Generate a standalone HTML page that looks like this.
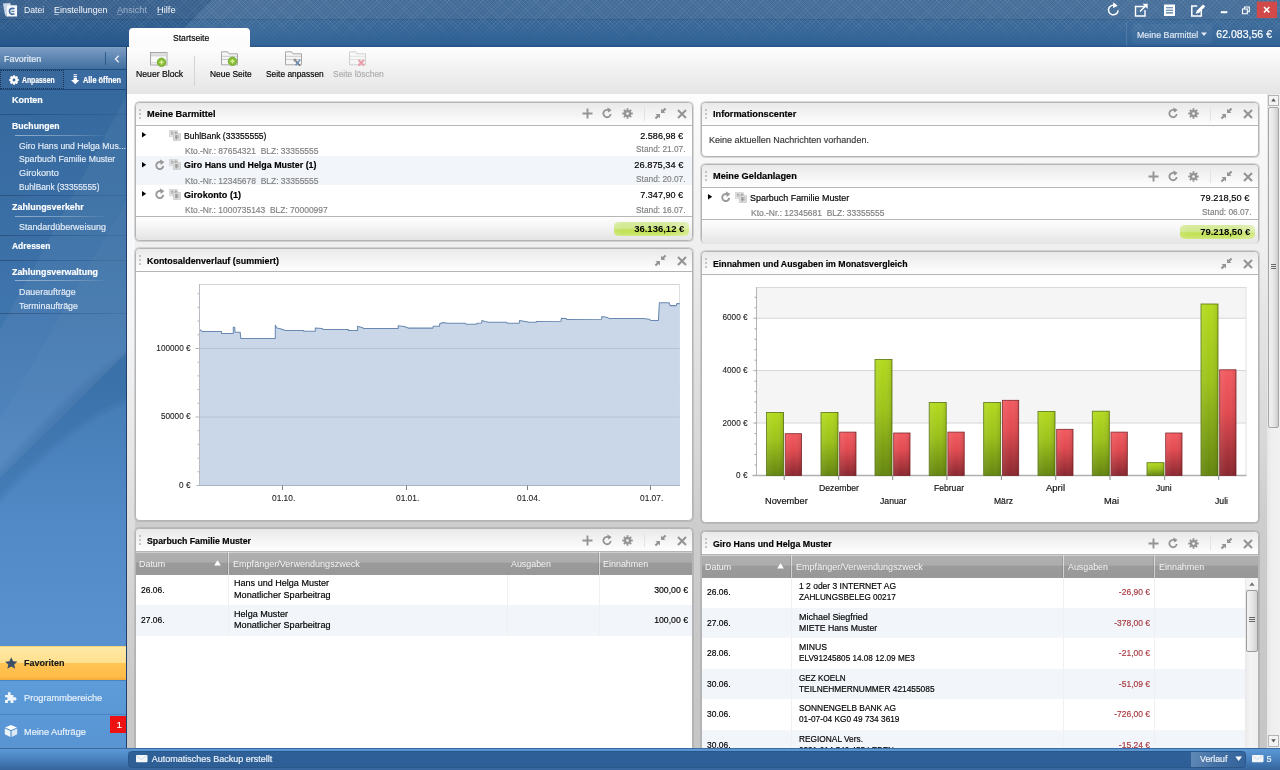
<!DOCTYPE html>
<html lang="de"><head><meta charset="utf-8"><title>Startseite</title>
<style>
html,body{margin:0;padding:0}
body{width:1280px;height:770px;position:relative;overflow:hidden;background:#fff;font-family:"Liberation Sans",sans-serif;font-size:10px}
div,span,svg,section,nav,header,footer{position:absolute;box-sizing:border-box;display:block}
.g{left:0;top:0;width:0;height:0}
.t{white-space:pre;line-height:1;-webkit-text-stroke:.17px currentColor}
.panel{border:1px solid #b4b4b4;border-radius:4.5px;background:#fff;box-shadow:0 0 0 1px rgba(140,140,140,.3);overflow:hidden}
.ph{left:0;top:0;right:0;height:23px;background:linear-gradient(#e9e9e9,#f3f3f3 45%,#fefefe);border-bottom:1px solid #b5b5b5}
.th{background:linear-gradient(#cfcfcf 0,#cfcfcf 1px,#afafaf 1.5px,#acacac 10px,#9b9b9b 11.5px,#989898 21px,#9a9a9a)}
.badge{border-radius:4.5px;background:linear-gradient(90deg,rgba(255,255,255,.12),rgba(255,255,255,0) 12%,rgba(255,255,255,0) 70%,rgba(255,255,255,.3)),linear-gradient(#d9eca4,#d0e88a 45%,#c1e055 58%,#c8e464 85%,#d2e98a)}
#app{left:0;top:0;width:1280px;height:770px;will-change:transform;overflow:hidden}
</style></head><body><div id="app">
<header class="g" id="titlebar">
<div style="left:0px;top:0px;width:1280px;height:47px;background:linear-gradient(#3f6996,#3d6795 18.5px,#2b5989 18.5px,#2b5989 19.5px,#336394 19.5px,#2d6095 42px,#2a5c92 45px,#1f4d80 47px)"></div>
<svg style="left:0;top:0" width="1280" height="47" viewBox="0 0 1280 47"><defs><linearGradient id="tb1" x1="0" y1="0" x2="1" y2="0"><stop offset="0" stop-color="#fff" stop-opacity=".06"/><stop offset=".25" stop-color="#fff" stop-opacity=".015"/><stop offset="1" stop-color="#fff" stop-opacity=".04"/></linearGradient></defs><polygon points="0,0 212,0 165,47 0,47" fill="#0c2f5e" fill-opacity=".13"/><polygon points="212,0 1280,0 1280,47 165,47" fill="url(#tb1)"/></svg>
<div style="left:0px;top:0px;width:1280px;height:40px;background:repeating-linear-gradient(45deg,rgba(255,255,255,.055) 0,rgba(255,255,255,.055) 1px,rgba(255,255,255,0) 1px,rgba(255,255,255,0) 3px),repeating-linear-gradient(-45deg,rgba(255,255,255,.055) 0,rgba(255,255,255,.055) 1px,rgba(255,255,255,0) 1px,rgba(255,255,255,0) 3px);-webkit-mask-image:linear-gradient(#000 0,#000 26px,transparent 40px);mask-image:linear-gradient(#000 0,#000 26px,transparent 40px)"></div>
<svg style="left:1.5px;top:2.2px" width="16" height="16" viewBox="0 0 17 17"><path d="M1 1.5l7.5-.5 1 2.5-6 11.5z" fill="#c9d6e6"/><path d="M5.5 3.5h10.5v12h-11.5z" fill="#f2f5f9"/><path d="M13.2 7.2c-3.2-1.2-5.3.4-5.3 2.7s2.2 3.8 5.3 2.6" fill="none" stroke="#3c6a9a" stroke-width="1.7"/><path d="M10 9.9h3.2" stroke="#3c6a9a" stroke-width="1.1"/></svg>
<span class="t" style="left:23.9px;transform-origin:0 7px;top:6px;font-size:9.18px;color:#f4f7fb;transform:scale(0.943,1.06);-webkit-text-stroke:0">Datei</span>
<span class="t" style="left:53.6px;transform-origin:0 7px;top:6px;font-size:9.18px;color:#f4f7fb;transform:scale(0.973,1.06);-webkit-text-stroke:0">Einstellungen</span>
<span class="t" style="left:116.9px;transform-origin:0 7px;top:6px;font-size:9.18px;color:#9db2cb;transform:scale(0.997,1.06);-webkit-text-stroke:0">Ansicht</span>
<span class="t" style="left:156.7px;transform-origin:0 7px;top:6px;font-size:9.18px;color:#f4f7fb;transform:scale(1.013,1.06);-webkit-text-stroke:0">Hilfe</span>
<div style="left:54px;top:14px;width:5px;height:1px;background:rgba(230,237,245,.55)"></div>
<div style="left:117px;top:14px;width:5px;height:1px;background:rgba(160,180,205,.5)"></div>
<div style="left:157px;top:14px;width:5px;height:1px;background:rgba(230,237,245,.55)"></div>
<svg style="left:1105px;top:.6px" width="175" height="18" viewBox="0 0 175 18"><g fill="none" stroke="#fff" stroke-width="1.5"><path d="M11.3 5.3a4.8 4.8 0 1 0 1.8 3.9"/></g><path d="M8.2 1.2l4.4 3.4-4.4 2.6z" fill="#fff"/><g fill="none" stroke="#fff" stroke-width="1.4"><path d="M40.5 5.5h-10v9.5h9.5v-6"/><path d="M35 10.5l6.5-6.5"/></g><path d="M37.5 2.8h5.2v5.2z" fill="#fff"/><rect x="59" y="3.5" width="11" height="11.5" fill="#fff"/><path d="M61 6.7h7M61 9.3h7M61 11.9h7" stroke="#41709f" stroke-width="1.1"/><g transform="translate(3.8 0)"><path d="M92.5 8.5v6.5h-9.5v-10h5.5" fill="none" stroke="#fff" stroke-width="1.5"/><path d="M87 12.8l.9-3.1 6.3-6.3 2.2 2.2-6.3 6.3z" fill="#fff"/></g><rect x="115.8" y="10.2" width="6.5" height="2" fill="#fff"/><path d="M137.5 8h4.8v4.8h-4.8z M139.5 8v-2h4.8v4.8h-2" fill="none" stroke="#fff" stroke-width="1.1"/><rect x="151.8" y="0.6" width="20.2" height="16.4" fill="#d14949"/><path d="M159 6l5.4 5.4M164.4 6l-5.4 5.4" stroke="#fff" stroke-width="1.5"/></svg>
<div style="left:129px;top:28px;width:121px;height:20px;background:linear-gradient(#fff,#fbfbfb);border-radius:4px 4px 0 0"></div>
<span class="t" style="left:173px;transform-origin:0 7px;top:34px;font-size:9.0px;color:#000;transform:scale(0.954,1.06);">Startseite</span>
<div style="left:1126px;top:22px;width:1px;height:24px;background:rgba(255,255,255,.13)"></div>
<div style="left:1133px;top:25px;width:78px;height:18px;background:rgba(255,255,255,.045);border-radius:2px;box-shadow:0 0 0 1px rgba(255,255,255,.04)"></div>
<span class="t" style="left:1137px;transform-origin:0 7px;top:31px;font-size:8.55px;color:#dfe8f2;transform:scale(1.033,1.06);">Meine Barmittel</span>
<svg style="left:1201px;top:32px" width="7" height="5"><path d="M0 .5h6l-3 3.5z" fill="#e6edf5"/></svg>
<span class="t" style="right:-1272px;transform-origin:100% 9px;top:29px;font-size:10.8px;color:#fff;transform:scale(0.978,1.06);">62.083,56 €</span>
</header>
<nav class="g" id="sidebar">
<div style="left:0px;top:47px;width:127px;height:701px;background:linear-gradient(#35699e 0,#366a9f 60px,#3b70a7 200px,#447bb4 330px,#5089c5 470px,#5992cf 600px)"></div>
<svg style="left:0;top:47px" width="127" height="701" viewBox="0 47 127 701"><defs><filter id="sbl" x="-20%" y="-20%" width="140%" height="140%"><feGaussianBlur stdDeviation="2.5"/></filter></defs><polygon points="127,95 127,352 0,478 0,330" fill="#fff" fill-opacity=".045"/><polygon points="127,200 127,352 0,478 0,420" fill="#fff" fill-opacity=".025"/><g filter="url(#sbl)"><path d="M135 348 C 80 380, 40 430, -8 478 L -8 508 C 40 455, 85 415, 135 398 Z" fill="#0a2d5c" fill-opacity=".13"/></g></svg>
<div style="left:0px;top:47px;width:127px;height:23px;background:linear-gradient(#86a6c9 0,#7a9cc3 1px,#6188b4 45%,#416f9f);border-bottom:1px solid #214b7c"></div>
<span class="t" style="left:4px;transform-origin:0 7px;top:55px;font-size:9.0px;color:#e9eff6;transform:scale(0.991,1.06);">Favoriten</span>
<div style="left:105px;top:52px;width:1px;height:13px;background:#2c5a8c"></div>
<svg style="left:113px;top:54px" width="8" height="10"><path d="M5.7 1.7L2.4 5l3.3 3.3" fill="none" stroke="#e9eff6" stroke-width="1.3"/></svg>
<div style="left:0px;top:70px;width:127px;height:20px;background:#3a6ba0;border-bottom:1px solid #1f4a7c"></div>
<div style="left:0px;top:70px;width:64px;height:19px;border:1px dotted #18365c;background:#38689c"></div>
<svg style="left:9px;top:74.7px" width="10" height="10" viewBox="0 0 12 12"><g fill="#fff"><circle cx="6" cy="6" r="4.6"/><rect x="4.7" y=".3" width="2.6" height="11.4" rx=".6"/><rect x=".3" y="4.7" width="11.4" height="2.6" rx=".6"/><g transform="rotate(45 6 6)"><rect x="4.7" y=".3" width="2.6" height="11.4" rx=".6"/><rect x=".3" y="4.7" width="11.4" height="2.6" rx=".6"/></g></g><circle cx="6" cy="6" r="1.7" fill="#38689c"/></svg>
<span class="t" style="left:22.3px;transform-origin:0 6px;top:77px;font-size:7.92px;font-weight:bold;color:#fff;transform:scale(0.863,1.06);">Anpassen</span>
<svg style="left:70.8px;top:74.3px" width="8.5" height="10.5" viewBox="0 0 10 12.4"><path d="M3 0h4v1h-4zM3 2h4v1.5h-4zM3 4.5h4v2.7h3l-5 5-5-5h3z" fill="#fff"/></svg>
<span class="t" style="left:83.3px;transform-origin:0 6px;top:77px;font-size:7.92px;font-weight:bold;color:#fff;transform:scale(0.93,1.06);">Alle öffnen</span>
<span class="t" style="left:11.6px;transform-origin:0 7px;top:96px;font-size:9.18px;font-weight:bold;color:#fff;transform:scale(0.975,1.06);">Konten</span>
<div style="left:0px;top:114px;width:127px;height:1px;background:linear-gradient(90deg,rgba(20,50,90,.45),rgba(20,50,90,.3) 40%,rgba(20,50,90,.12))"></div>
<span class="t" style="left:11.6px;transform-origin:0 7px;top:122px;font-size:9.18px;font-weight:bold;color:#fff;transform:scale(0.945,1.06);">Buchungen</span>
<div style="left:15px;top:135px;width:95px;height:1px;background:linear-gradient(90deg,rgba(255,255,255,.45),rgba(255,255,255,.25) 60%,rgba(255,255,255,0))"></div>
<span class="t" style="left:19.4px;transform-origin:0 7px;top:142px;font-size:9.0px;color:#e4ecf6;transform:scale(0.963,1.06);">Giro Hans und Helga Mus...</span>
<span class="t" style="left:19.4px;transform-origin:0 7px;top:155px;font-size:9.0px;color:#e4ecf6;transform:scale(0.961,1.06);">Sparbuch Familie Muster</span>
<span class="t" style="left:19.4px;transform-origin:0 7px;top:169px;font-size:9.0px;color:#e4ecf6;transform:scale(1.022,1.06);">Girokonto</span>
<span class="t" style="left:19.4px;transform-origin:0 7px;top:183px;font-size:9.0px;color:#e4ecf6;transform:scale(0.924,1.06);">BuhlBank (33355555)</span>
<div style="left:0px;top:195px;width:127px;height:1px;background:linear-gradient(90deg,rgba(20,50,90,.45),rgba(20,50,90,.3) 40%,rgba(20,50,90,.12))"></div>
<span class="t" style="left:11.6px;transform-origin:0 7px;top:203px;font-size:9.18px;font-weight:bold;color:#fff;transform:scale(0.97,1.06);">Zahlungsverkehr</span>
<div style="left:15px;top:216px;width:95px;height:1px;background:linear-gradient(90deg,rgba(255,255,255,.45),rgba(255,255,255,.25) 60%,rgba(255,255,255,0))"></div>
<span class="t" style="left:19.4px;transform-origin:0 7px;top:223px;font-size:9.0px;color:#e4ecf6;transform:scale(0.992,1.06);">Standardüberweisung</span>
<div style="left:0px;top:235px;width:127px;height:1px;background:linear-gradient(90deg,rgba(20,50,90,.45),rgba(20,50,90,.3) 40%,rgba(20,50,90,.12))"></div>
<span class="t" style="left:11.6px;transform-origin:0 7px;top:242px;font-size:9.18px;font-weight:bold;color:#fff;transform:scale(0.916,1.06);">Adressen</span>
<div style="left:0px;top:260px;width:127px;height:1px;background:linear-gradient(90deg,rgba(20,50,90,.45),rgba(20,50,90,.3) 40%,rgba(20,50,90,.12))"></div>
<span class="t" style="left:11.6px;transform-origin:0 7px;top:268px;font-size:9.18px;font-weight:bold;color:#fff;transform:scale(0.964,1.06);">Zahlungsverwaltung</span>
<div style="left:15px;top:280px;width:95px;height:1px;background:linear-gradient(90deg,rgba(255,255,255,.45),rgba(255,255,255,.25) 60%,rgba(255,255,255,0))"></div>
<span class="t" style="left:19.4px;transform-origin:0 7px;top:288px;font-size:9.0px;color:#e4ecf6;transform:scale(0.985,1.06);">Daueraufträge</span>
<span class="t" style="left:19.4px;transform-origin:0 7px;top:302px;font-size:9.0px;color:#e4ecf6;transform:scale(0.981,1.06);">Terminaufträge</span>
<div style="left:0px;top:313px;width:127px;height:1px;background:linear-gradient(90deg,rgba(20,50,90,.45),rgba(20,50,90,.3) 40%,rgba(20,50,90,.12))"></div>
<div style="left:0px;top:646px;width:127px;height:34px;background:linear-gradient(#ffe9a6,#ffe08e 47%,#ffc554 50%,#ffbb47 90%,#f3a93a);border-top:1px solid #f6d27c"></div>
<svg style="left:4.7px;top:656.5px" width="12.5" height="12" viewBox="0 0 14 13"><path d="M7 0l2.1 4.5 4.9.5-3.7 3.2 1.1 4.8-4.4-2.6-4.4 2.6 1.1-4.8L0 5l4.9-.5z" fill="#3c5068"/></svg>
<span class="t" style="left:24px;transform-origin:0 7px;top:659px;font-size:9.0px;font-weight:bold;color:#1a1a1a;transform:scale(1.0,1.06);">Favoriten</span>
<div style="left:0px;top:680px;width:127px;height:34px;background:linear-gradient(#5d9bd9,#5a97d5);border-top:1px solid #4b84c0"></div>
<svg style="left:4px;top:690px" width="14" height="14" viewBox="0 0 14 14"><path d="M1 5h3.2c-.9-1.5-.3-3 1.1-3s2 1.5 1.1 3H9.5v2.8c1.5-.9 3-.3 3 1.1s-1.5 2-3 1.1V13H6.4c.8-1.4.2-2.6-1.1-2.6S3.4 11.6 4.2 13H1V9.7c1.3.8 2.6.2 2.6-1.1S2.3 6.7 1 7.5z" fill="#eef4fb"/></svg>
<span class="t" style="left:24px;transform-origin:0 7px;top:694px;font-size:9.0px;color:#e9f1fa;transform:scale(1.022,1.06);">Programmbereiche</span>
<div style="left:0px;top:714px;width:127px;height:34px;background:linear-gradient(#5b98d7,#5894d2);border-top:1px solid #4b84c0"></div>
<svg style="left:4px;top:724px" width="14" height="14" viewBox="0 0 14 14"><path d="M7 1l6 2.5-6 2.5-6-2.5z" fill="#fff"/><path d="M.8 4.6l5.6 2.4v6l-5.6-2.7z" fill="#eef4fb"/><path d="M13.2 4.6l-5.6 2.4v6l5.6-2.7z" fill="#dde8f5"/></svg>
<span class="t" style="left:24px;transform-origin:0 7px;top:728px;font-size:9.0px;color:#e9f1fa;transform:scale(1.022,1.06);">Meine Aufträge</span>
<div style="left:110px;top:716px;width:17px;height:17px;background:#ee1111"></div>
<span class="t" style="left:118.5px;transform-origin:0 50%;transform:translateX(-50%) scaleX(1.111);top:721px;font-size:9.0px;color:#fff;">1</span>
<div style="left:126px;top:47px;width:1px;height:701px;background:#1f4068"></div>
</nav>
<section class="g" id="toolbar">
<div style="left:127px;top:47px;width:1153px;height:47px;background:linear-gradient(#fefefe,#f6f6f6 30%,#ececec 70%,#e5e5e5)"></div>
<div style="left:129px;top:47px;width:121px;height:2px;background:#fdfdfd"></div>
<svg style="left:150px;top:52px" width="18" height="17" viewBox="0 0 18 17"><rect x=".5" y=".5" width="16.5" height="12.5" fill="#fafafa" stroke="#a8a8a8"/><rect x="1" y="1" width="15.5" height="2.3" fill="#dedede"/><path d="M1 3.8h15.5" stroke="#c4c4c4" stroke-width=".8"/><path d="M1 10.8h15.5" stroke="#d0d0d0"/><circle cx="11.5" cy="10.3" r="4.3" fill="#86bc3a"/><circle cx="11.5" cy="10.3" r="4.2" fill="none" stroke="#74a92c" stroke-width=".9"/><path d="M9.4 10.3h4.2M11.5 8.2v4.2" stroke="#d9ef8e" stroke-width="1.5"/></svg>
<span class="t" style="left:135.8px;transform-origin:0 7px;top:70px;font-size:9.0px;color:#000;transform:scale(0.963,1.06);">Neuer Block</span>
<div style="left:194px;top:56px;width:1px;height:30px;background:#d4d4d4"></div>
<svg style="left:221px;top:51px" width="18" height="17" viewBox="0 0 18 17"><path d="M.5 2.8V.8h6.3l1.2 2h8.5v11h-16z" fill="#f6f6f6" stroke="#a8a8a8"/><path d="M1 5.3h15M1 8.5h15" stroke="#cbcbcb"/><circle cx="11.5" cy="10.3" r="4.3" fill="#86bc3a"/><circle cx="11.5" cy="10.3" r="4.2" fill="none" stroke="#74a92c" stroke-width=".9"/><path d="M9.4 10.3h4.2M11.5 8.2v4.2" stroke="#d9ef8e" stroke-width="1.5"/></svg>
<span class="t" style="left:209.6px;transform-origin:0 7px;top:70px;font-size:9.0px;color:#000;transform:scale(0.936,1.06);">Neue Seite</span>
<svg style="left:285px;top:51px" width="18" height="17" viewBox="0 0 18 17"><path d="M.5 2.8V.8h6.3l1.2 2h8.5v11h-16z" fill="#f6f6f6" stroke="#a8a8a8"/><path d="M1 5.3h15M1 8.5h15" stroke="#cbcbcb"/><g transform="translate(.6 1.2)"><path d="M9 7.5l5.5 6" stroke="#777" stroke-width="1.7"/><path d="M14.5 7.5l-4.5 5.5" stroke="#6a93c0" stroke-width="1.7"/><circle cx="9.3" cy="7.8" r="1.5" fill="#909090"/></g></svg>
<span class="t" style="left:265.7px;transform-origin:0 7px;top:70px;font-size:9.0px;color:#000;transform:scale(0.93,1.06);">Seite anpassen</span>
<svg style="left:349px;top:51px;opacity:.5" width="18" height="17" viewBox="0 0 18 17"><path d="M.5 2.8V.8h6.3l1.2 2h8.5v11h-16z" fill="#f6f6f6" stroke="#a8a8a8"/><path d="M1 5.3h15M1 8.5h15" stroke="#cbcbcb"/><path d="M9.5 9l5.5 5.5M15 9l-5.5 5.5" stroke="#e0455a" stroke-width="2"/></svg>
<span class="t" style="left:332.7px;transform-origin:0 7px;top:70px;font-size:9.0px;color:#adadad;transform:scale(0.94,1.06);">Seite löschen</span>
</section>
<section class="g" id="content">
<div style="left:127px;top:94px;width:1153px;height:654px;background:linear-gradient(#fdfdfd 0,#f7f7f7 60px,#efefef 156px,#e6e6e6 206px,#d6d6d6 366px,#cdcdcd 426px,#c8c8c8 560px,#c6c6c6 654px)"></div>
<div style="left:127px;top:94px;width:8px;height:654px;background:linear-gradient(#fefefe 0,#f5f6f8 226px,#e3e3e3 386px,#d2d2d2 506px,#c8c8c8 606px,#c7c7c7 654px)"></div>
<section class="g" id="p-barmittel">
<div class="panel" style="left:135px;top:102px;width:558px;height:139px;"><div class="ph"></div></div>
<div style="left:139px;top:109px;width:2px;height:2px;background:#b5b5b5;border-radius:1px"></div><div style="left:139px;top:113px;width:2px;height:2px;background:#b5b5b5;border-radius:1px"></div><div style="left:139px;top:117px;width:2px;height:2px;background:#b5b5b5;border-radius:1px"></div>
<span class="t" style="left:147.3px;transform-origin:0 7px;top:110px;font-size:9.0px;font-weight:bold;color:#000;transform:scale(1.022,1.06);">Meine Barmittel</span>
<svg style="left:677px;top:109px" width="10" height="10"><path d="M1 1l8 8M9 1l-8 8" stroke="#949494" stroke-width="2.1"/></svg><svg style="left:654.1px;top:107px" width="13" height="13" viewBox="0 0 12 12"><g fill="#949494"><path d="M6.5 5.5V1.5l1.3 1.3L10 .6l1.4 1.4-2.2 2.2 1.3 1.3z"/><path d="M5.5 6.5v4L4.2 9.2 2 11.4.6 10l2.2-2.2L1.5 6.5z"/></g></svg><div style="left:644px;top:106.5px;width:1px;height:14px;background:#e3e3e3"></div><svg style="left:621.9px;top:108px" width="11" height="11" viewBox="0 0 12 12"><g stroke="#949494" stroke-width="2"><path d="M6 .3v11.4M.3 6h11.4M2 2l8 8M10 2l-8 8"/></g><circle cx="6" cy="6" r="3.8" fill="#949494"/><circle cx="6" cy="6" r="1.5" fill="#f2f2f2"/></svg><svg style="left:600.7px;top:107px" width="12" height="12" viewBox="0 0 12 12"><path d="M8.9 4.2A3.7 3.7 0 1 0 9.7 7" fill="none" stroke="#949494" stroke-width="1.8"/><path d="M6.3 .3l4.3 2.6-3.4 2.7z" fill="#949494"/></svg><svg style="left:581.5px;top:108px" width="11" height="11"><path d="M5.5 .5v10M.5 5.5h10" stroke="#949494" stroke-width="1.9"/></svg>
<svg style="left:142.3px;top:132.0px" width="5" height="6"><path d="M0 0l4.2 2.8L0 5.6z" fill="#000"/></svg><svg style="left:168.8px;top:129.6px" width="12" height="11" viewBox="0 0 12 11"><rect x=".3" y=".3" width="8" height="6.5" fill="#e4e4e4" stroke="#d0d0d0" stroke-width=".6"/><rect x="4.2" y="3.6" width="7.4" height="7" fill="#dadada" stroke="#c6c6c6" stroke-width=".6"/><path d="M1.8 2.2h2.6M1.8 4h2M6.3 1.5v2.2M7.8 1.8v1.6M6 6h3.6M6 7.8h3.6M7.2 5v4.5" stroke="#8c8c8c" stroke-width=".9" fill="none"/></svg><span class="t" style="left:183.6px;transform-origin:0 7px;top:132px;font-size:9.0px;color:#000;transform:scale(0.947,1.06);">BuhlBank (33355555)</span><span class="t" style="left:184.5px;transform-origin:0 7px;top:147px;font-size:9.0px;color:#808080;transform:scale(0.939,1.06);">Kto.-Nr.: 87654321  BLZ: 33355555</span><span class="t" style="right:-683.3px;transform-origin:100% 8px;top:131px;font-size:9.54px;color:#000;transform:scale(0.95,1.04);">2.586,98 €</span><span class="t" style="right:-685.5px;transform-origin:100% 7px;top:145px;font-size:9.0px;color:#808080;transform:scale(0.924,1.06);">Stand: 21.07.</span><div style="left:136px;top:156.2px;width:556px;height:29.3px;background:#f2f5fa"></div><svg style="left:142.3px;top:161.7px" width="5" height="6"><path d="M0 0l4.2 2.8L0 5.6z" fill="#000"/></svg><svg style="left:153.7px;top:158.8px" width="11.5" height="12" viewBox="0 0 12 12"><path d="M8.9 4.2A3.7 3.7 0 1 0 9.7 7" fill="none" stroke="#9a9a9a" stroke-width="2"/><path d="M6 .1l4.8 2.8-3.7 3z" fill="#9a9a9a"/></svg><svg style="left:168.8px;top:159.3px" width="12" height="11" viewBox="0 0 12 11"><rect x=".3" y=".3" width="8" height="6.5" fill="#e4e4e4" stroke="#d0d0d0" stroke-width=".6"/><rect x="4.2" y="3.6" width="7.4" height="7" fill="#dadada" stroke="#c6c6c6" stroke-width=".6"/><path d="M1.8 2.2h2.6M1.8 4h2M6.3 1.5v2.2M7.8 1.8v1.6M6 6h3.6M6 7.8h3.6M7.2 5v4.5" stroke="#8c8c8c" stroke-width=".9" fill="none"/></svg><span class="t" style="left:183.6px;transform-origin:0 7px;top:161px;font-size:9.0px;font-weight:bold;color:#000;transform:scale(0.985,1.06);">Giro Hans und Helga Muster (1)</span><span class="t" style="left:184.5px;transform-origin:0 7px;top:177px;font-size:9.0px;color:#808080;transform:scale(0.939,1.06);">Kto.-Nr.: 12345678  BLZ: 33355555</span><span class="t" style="right:-683.3px;transform-origin:100% 8px;top:160px;font-size:9.54px;color:#000;transform:scale(0.973,1.04);">26.875,34 €</span><span class="t" style="right:-685.5px;transform-origin:100% 7px;top:175px;font-size:9.0px;color:#808080;transform:scale(0.924,1.06);">Stand: 20.07.</span><svg style="left:142.3px;top:191.3px" width="5" height="6"><path d="M0 0l4.2 2.8L0 5.6z" fill="#000"/></svg><svg style="left:153.7px;top:188.4px" width="11.5" height="12" viewBox="0 0 12 12"><path d="M8.9 4.2A3.7 3.7 0 1 0 9.7 7" fill="none" stroke="#9a9a9a" stroke-width="2"/><path d="M6 .1l4.8 2.8-3.7 3z" fill="#9a9a9a"/></svg><svg style="left:168.8px;top:188.9px" width="12" height="11" viewBox="0 0 12 11"><rect x=".3" y=".3" width="8" height="6.5" fill="#e4e4e4" stroke="#d0d0d0" stroke-width=".6"/><rect x="4.2" y="3.6" width="7.4" height="7" fill="#dadada" stroke="#c6c6c6" stroke-width=".6"/><path d="M1.8 2.2h2.6M1.8 4h2M6.3 1.5v2.2M7.8 1.8v1.6M6 6h3.6M6 7.8h3.6M7.2 5v4.5" stroke="#8c8c8c" stroke-width=".9" fill="none"/></svg><span class="t" style="left:183.6px;transform-origin:0 7px;top:191px;font-size:9.0px;font-weight:bold;color:#000;transform:scale(1.009,1.06);">Girokonto (1)</span><span class="t" style="left:184.5px;transform-origin:0 7px;top:206px;font-size:9.0px;color:#808080;transform:scale(0.938,1.06);">Kto.-Nr.: 1000735143  BLZ: 70000997</span><span class="t" style="right:-683.3px;transform-origin:100% 8px;top:190px;font-size:9.54px;color:#000;transform:scale(0.95,1.04);">7.347,90 €</span><span class="t" style="right:-685.5px;transform-origin:100% 7px;top:206px;font-size:9.0px;color:#808080;transform:scale(0.924,1.06);">Stand: 16.07.</span><div style="left:136px;top:216px;width:556px;height:24px;background:linear-gradient(#fefefe,#f5f5f5 40%,#e4e4e4);border-top:1px solid #b5b5b5;border-radius:0 0 4px 4px"></div><div class="badge" style="left:613.5px;top:221.5px;width:75.2px;height:14.3px;"></div><span class="t" style="right:-684px;transform-origin:100% 8px;top:224px;font-size:9.54px;font-weight:bold;color:#000;transform:scale(0.997,1.04);-webkit-text-stroke:0">36.136,12 €</span>
</section>
<section class="g" id="p-info">
<div class="panel" style="left:701px;top:102px;width:558px;height:55px;"><div class="ph"></div></div>
<div style="left:705px;top:109px;width:2px;height:2px;background:#b5b5b5;border-radius:1px"></div><div style="left:705px;top:113px;width:2px;height:2px;background:#b5b5b5;border-radius:1px"></div><div style="left:705px;top:117px;width:2px;height:2px;background:#b5b5b5;border-radius:1px"></div>
<span class="t" style="left:713.3px;transform-origin:0 7px;top:110px;font-size:9.0px;font-weight:bold;color:#000;transform:scale(1.022,1.06);">Informationscenter</span>
<svg style="left:1243px;top:109px" width="10" height="10"><path d="M1 1l8 8M9 1l-8 8" stroke="#949494" stroke-width="2.1"/></svg><svg style="left:1220.1px;top:107px" width="13" height="13" viewBox="0 0 12 12"><g fill="#949494"><path d="M6.5 5.5V1.5l1.3 1.3L10 .6l1.4 1.4-2.2 2.2 1.3 1.3z"/><path d="M5.5 6.5v4L4.2 9.2 2 11.4.6 10l2.2-2.2L1.5 6.5z"/></g></svg><div style="left:1210px;top:106.5px;width:1px;height:14px;background:#e3e3e3"></div><svg style="left:1187.9px;top:108px" width="11" height="11" viewBox="0 0 12 12"><g stroke="#949494" stroke-width="2"><path d="M6 .3v11.4M.3 6h11.4M2 2l8 8M10 2l-8 8"/></g><circle cx="6" cy="6" r="3.8" fill="#949494"/><circle cx="6" cy="6" r="1.5" fill="#f2f2f2"/></svg><svg style="left:1166.7px;top:107px" width="12" height="12" viewBox="0 0 12 12"><path d="M8.9 4.2A3.7 3.7 0 1 0 9.7 7" fill="none" stroke="#949494" stroke-width="1.8"/><path d="M6.3 .3l4.3 2.6-3.4 2.7z" fill="#949494"/></svg>
<span class="t" style="left:709.2px;transform-origin:0 7px;top:136px;font-size:9.0px;color:#3a3a3a;transform:scale(1.002,1.06);">Keine aktuellen Nachrichten vorhanden.</span>
</section>
<section class="g" id="p-geld">
<div class="panel" style="left:701px;top:164px;width:558px;height:79.2px;"><div class="ph"></div></div>
<div style="left:705px;top:171px;width:2px;height:2px;background:#b5b5b5;border-radius:1px"></div><div style="left:705px;top:175px;width:2px;height:2px;background:#b5b5b5;border-radius:1px"></div><div style="left:705px;top:179px;width:2px;height:2px;background:#b5b5b5;border-radius:1px"></div>
<span class="t" style="left:713.3px;transform-origin:0 7px;top:172px;font-size:9.0px;font-weight:bold;color:#000;transform:scale(1.022,1.06);">Meine Geldanlagen</span>
<svg style="left:1243px;top:171.5px" width="10" height="10"><path d="M1 1l8 8M9 1l-8 8" stroke="#949494" stroke-width="2.1"/></svg><svg style="left:1220.1px;top:169.5px" width="13" height="13" viewBox="0 0 12 12"><g fill="#949494"><path d="M6.5 5.5V1.5l1.3 1.3L10 .6l1.4 1.4-2.2 2.2 1.3 1.3z"/><path d="M5.5 6.5v4L4.2 9.2 2 11.4.6 10l2.2-2.2L1.5 6.5z"/></g></svg><div style="left:1210px;top:169.0px;width:1px;height:14px;background:#e3e3e3"></div><svg style="left:1187.9px;top:170.5px" width="11" height="11" viewBox="0 0 12 12"><g stroke="#949494" stroke-width="2"><path d="M6 .3v11.4M.3 6h11.4M2 2l8 8M10 2l-8 8"/></g><circle cx="6" cy="6" r="3.8" fill="#949494"/><circle cx="6" cy="6" r="1.5" fill="#f2f2f2"/></svg><svg style="left:1166.7px;top:169.5px" width="12" height="12" viewBox="0 0 12 12"><path d="M8.9 4.2A3.7 3.7 0 1 0 9.7 7" fill="none" stroke="#949494" stroke-width="1.8"/><path d="M6.3 .3l4.3 2.6-3.4 2.7z" fill="#949494"/></svg><svg style="left:1147.5px;top:170.5px" width="11" height="11"><path d="M5.5 .5v10M.5 5.5h10" stroke="#949494" stroke-width="1.9"/></svg>
<svg style="left:708.3px;top:194.2px" width="5" height="6"><path d="M0 0l4.2 2.8L0 5.6z" fill="#000"/></svg><svg style="left:719.7px;top:191.3px" width="11.5" height="12" viewBox="0 0 12 12"><path d="M8.9 4.2A3.7 3.7 0 1 0 9.7 7" fill="none" stroke="#9a9a9a" stroke-width="2"/><path d="M6 .1l4.8 2.8-3.7 3z" fill="#9a9a9a"/></svg><svg style="left:734.8px;top:191.8px" width="12" height="11" viewBox="0 0 12 11"><rect x=".3" y=".3" width="8" height="6.5" fill="#e4e4e4" stroke="#d0d0d0" stroke-width=".6"/><rect x="4.2" y="3.6" width="7.4" height="7" fill="#dadada" stroke="#c6c6c6" stroke-width=".6"/><path d="M1.8 2.2h2.6M1.8 4h2M6.3 1.5v2.2M7.8 1.8v1.6M6 6h3.6M6 7.8h3.6M7.2 5v4.5" stroke="#8c8c8c" stroke-width=".9" fill="none"/></svg><span class="t" style="left:749.6px;transform-origin:0 7px;top:194px;font-size:9.0px;color:#000;transform:scale(0.992,1.06);">Sparbuch Familie Muster</span><span class="t" style="left:750.5px;transform-origin:0 7px;top:209px;font-size:9.0px;color:#808080;transform:scale(0.939,1.06);">Kto.-Nr.: 12345681  BLZ: 33355555</span><span class="t" style="right:-1249.3px;transform-origin:100% 8px;top:193px;font-size:9.54px;color:#000;transform:scale(0.973,1.04);">79.218,50 €</span><span class="t" style="right:-1251.5px;transform-origin:100% 7px;top:208px;font-size:9.0px;color:#808080;transform:scale(0.924,1.06);">Stand: 06.07.</span><div style="left:702px;top:219px;width:556px;height:24.5px;background:linear-gradient(#fefefe,#f5f5f5 40%,#e4e4e4);border-top:1px solid #b5b5b5;border-radius:0 0 4px 4px"></div><div class="badge" style="left:1179.5px;top:224.5px;width:75.2px;height:14.3px;"></div><span class="t" style="right:-1250px;transform-origin:100% 8px;top:227px;font-size:9.54px;font-weight:bold;color:#000;transform:scale(0.997,1.04);-webkit-text-stroke:0">79.218,50 €</span>
</section>
<section class="g" id="p-saldo">
<div class="panel" style="left:135px;top:248px;width:558px;height:273px;"><div class="ph"></div></div>
<div style="left:139px;top:255px;width:2px;height:2px;background:#b5b5b5;border-radius:1px"></div><div style="left:139px;top:259px;width:2px;height:2px;background:#b5b5b5;border-radius:1px"></div><div style="left:139px;top:263px;width:2px;height:2px;background:#b5b5b5;border-radius:1px"></div>
<span class="t" style="left:147.3px;transform-origin:0 7px;top:257px;font-size:9.0px;font-weight:bold;color:#000;transform:scale(0.992,1.06);">Kontosaldenverlauf (summiert)</span>
<svg style="left:677px;top:255.5px" width="10" height="10"><path d="M1 1l8 8M9 1l-8 8" stroke="#949494" stroke-width="2.1"/></svg><svg style="left:654.1px;top:253.5px" width="13" height="13" viewBox="0 0 12 12"><g fill="#949494"><path d="M6.5 5.5V1.5l1.3 1.3L10 .6l1.4 1.4-2.2 2.2 1.3 1.3z"/><path d="M5.5 6.5v4L4.2 9.2 2 11.4.6 10l2.2-2.2L1.5 6.5z"/></g></svg>
<svg style="left:0;top:0" width="1280" height="770" viewBox="0 0 1280 770"><rect x="199.5" y="284" width="480.5" height="201.5" fill="#fff"/><path d="M199.5 284.5H680" stroke="#d4d4d4"/><path d="M679.5 284V485.5" stroke="#e0e0e0"/><polygon points="199.8,329.8 202.2,331.4 221.5,331.4 221.5,333.4 233.3,333.4 233.3,327.3 234.7,327.3 235.1,332.2 240.2,332.2 240.8,338.5 275.3,338.5 275.3,325.3 276.9,328.1 280.4,328.8 285.5,330.4 303.8,330.4 303.8,331.2 315.3,331.2 315.3,328.1 322.0,328.5 323.0,329.4 348.4,329.4 348.4,330.4 357.6,330.4 357.6,326.3 362.7,327.7 363.7,328.5 398.2,328.5 398.2,325.7 404.3,326.5 408.4,328.1 432.7,328.1 433.3,326.3 439.4,326.3 439.8,323.7 442.9,322.5 446.3,322.9 447.0,323.3 465.4,323.3 466.4,324.3 476.6,324.3 477.0,323.3 481.6,322.9 482.0,320.4 484.7,321.6 488.8,322.3 506.6,322.3 507.4,323.3 519.2,323.3 519.6,320.4 525.3,321.4 529.4,322.3 535.9,322.3 536.7,321.4 561.0,321.2 561.5,318.2 566.0,318.4 566.8,319.4 601.5,319.2 601.9,316.6 607.6,317.6 609.0,318.4 643.1,318.4 649.2,319.2 650.8,320.4 658.4,320.4 659.4,302.8 669.1,302.8 670.1,305.6 676.2,305.6 676.8,303.6 679.7,303.6 680,485.5 199.5,485.5" fill="#cad7e9"/><path d="M199.5 348.5H680" stroke="#b3c2d8" stroke-width="1"/><path d="M199.5 417H680" stroke="#b3c2d8" stroke-width="1"/><polyline points="199.8,329.8 202.2,331.4 221.5,331.4 221.5,333.4 233.3,333.4 233.3,327.3 234.7,327.3 235.1,332.2 240.2,332.2 240.8,338.5 275.3,338.5 275.3,325.3 276.9,328.1 280.4,328.8 285.5,330.4 303.8,330.4 303.8,331.2 315.3,331.2 315.3,328.1 322.0,328.5 323.0,329.4 348.4,329.4 348.4,330.4 357.6,330.4 357.6,326.3 362.7,327.7 363.7,328.5 398.2,328.5 398.2,325.7 404.3,326.5 408.4,328.1 432.7,328.1 433.3,326.3 439.4,326.3 439.8,323.7 442.9,322.5 446.3,322.9 447.0,323.3 465.4,323.3 466.4,324.3 476.6,324.3 477.0,323.3 481.6,322.9 482.0,320.4 484.7,321.6 488.8,322.3 506.6,322.3 507.4,323.3 519.2,323.3 519.6,320.4 525.3,321.4 529.4,322.3 535.9,322.3 536.7,321.4 561.0,321.2 561.5,318.2 566.0,318.4 566.8,319.4 601.5,319.2 601.9,316.6 607.6,317.6 609.0,318.4 643.1,318.4 649.2,319.2 650.8,320.4 658.4,320.4 659.4,302.8 669.1,302.8 670.1,305.6 676.2,305.6 676.8,303.6 679.7,303.6" fill="none" stroke="#6a89b1" stroke-width="1.05" stroke-linejoin="round"/><path d="M199.5 284V486.0" stroke="#b9bcc2" stroke-width="1"/><path d="M196.5 485.5H680" stroke="#a9b4c6" stroke-width="1"/><path d="M197.5 471.8H199.5" stroke="#b4b4b4" stroke-width="1"/><path d="M197.5 458.1H199.5" stroke="#b4b4b4" stroke-width="1"/><path d="M197.5 444.4H199.5" stroke="#b4b4b4" stroke-width="1"/><path d="M197.5 430.7H199.5" stroke="#b4b4b4" stroke-width="1"/><path d="M195.5 417.0H199.5" stroke="#b4b4b4" stroke-width="1"/><path d="M197.5 403.3H199.5" stroke="#b4b4b4" stroke-width="1"/><path d="M197.5 389.6H199.5" stroke="#b4b4b4" stroke-width="1"/><path d="M197.5 375.9H199.5" stroke="#b4b4b4" stroke-width="1"/><path d="M197.5 362.2H199.5" stroke="#b4b4b4" stroke-width="1"/><path d="M195.5 348.5H199.5" stroke="#b4b4b4" stroke-width="1"/><path d="M197.5 334.8H199.5" stroke="#b4b4b4" stroke-width="1"/><path d="M197.5 321.1H199.5" stroke="#b4b4b4" stroke-width="1"/><path d="M197.5 307.4H199.5" stroke="#b4b4b4" stroke-width="1"/><path d="M197.5 293.7H199.5" stroke="#b4b4b4" stroke-width="1"/><path d="M282.5 485.5v4.5" stroke="#808080" stroke-width="1"/><path d="M406.5 485.5v4.5" stroke="#808080" stroke-width="1"/><path d="M527.5 485.5v4.5" stroke="#808080" stroke-width="1"/><path d="M650.5 485.5v4.5" stroke="#808080" stroke-width="1"/></svg><span class="t" style="right:-191px;transform-origin:100% 7px;top:344px;font-size:9.0px;color:#1a1a1a;transform:scale(0.911,1.06);-webkit-text-stroke:.1px">100000 €</span><span class="t" style="right:-191px;transform-origin:100% 7px;top:412px;font-size:9.0px;color:#1a1a1a;transform:scale(0.911,1.06);-webkit-text-stroke:.1px">50000 €</span><span class="t" style="right:-191px;transform-origin:100% 7px;top:481px;font-size:9.0px;color:#1a1a1a;transform:scale(0.911,1.06);-webkit-text-stroke:.1px">0 €</span><span class="t" style="left:272.2px;transform-origin:0 7px;top:494px;font-size:9.0px;color:#1a1a1a;transform:scale(0.927,1.06);-webkit-text-stroke:.1px">01.10.</span><span class="t" style="left:396.2px;transform-origin:0 7px;top:494px;font-size:9.0px;color:#1a1a1a;transform:scale(0.927,1.06);-webkit-text-stroke:.1px">01.01.</span><span class="t" style="left:517.0px;transform-origin:0 7px;top:494px;font-size:9.0px;color:#1a1a1a;transform:scale(0.927,1.06);-webkit-text-stroke:.1px">01.04.</span><span class="t" style="left:640.4px;transform-origin:0 7px;top:494px;font-size:9.0px;color:#1a1a1a;transform:scale(0.927,1.06);-webkit-text-stroke:.1px">01.07.</span>
</section>
<section class="g" id="p-monat">
<div class="panel" style="left:701px;top:251px;width:558px;height:272px;"><div class="ph"></div></div>
<div style="left:705px;top:258px;width:2px;height:2px;background:#b5b5b5;border-radius:1px"></div><div style="left:705px;top:262px;width:2px;height:2px;background:#b5b5b5;border-radius:1px"></div><div style="left:705px;top:266px;width:2px;height:2px;background:#b5b5b5;border-radius:1px"></div>
<span class="t" style="left:713.3px;transform-origin:0 7px;top:260px;font-size:9.0px;font-weight:bold;color:#000;transform:scale(0.974,1.06);">Einnahmen und Ausgaben im Monatsvergleich</span>
<svg style="left:1243px;top:258.5px" width="10" height="10"><path d="M1 1l8 8M9 1l-8 8" stroke="#949494" stroke-width="2.1"/></svg><svg style="left:1220.1px;top:256.5px" width="13" height="13" viewBox="0 0 12 12"><g fill="#949494"><path d="M6.5 5.5V1.5l1.3 1.3L10 .6l1.4 1.4-2.2 2.2 1.3 1.3z"/><path d="M5.5 6.5v4L4.2 9.2 2 11.4.6 10l2.2-2.2L1.5 6.5z"/></g></svg>
<svg style="left:0;top:0" width="1280" height="770" viewBox="0 0 1280 770"><defs><linearGradient id="gg" x1="0" y1="0" x2="0" y2="1"><stop offset="0" stop-color="#b4da1f"/><stop offset=".45" stop-color="#9cc21a"/><stop offset="1" stop-color="#64850f"/></linearGradient><linearGradient id="gr" x1="0" y1="0" x2="0" y2="1"><stop offset="0" stop-color="#f25b60"/><stop offset=".4" stop-color="#e04a50"/><stop offset="1" stop-color="#8a272e"/></linearGradient><linearGradient id="gh" x1="0" y1="0" x2="1" y2="0"><stop offset="0" stop-color="#fff" stop-opacity=".08"/><stop offset=".5" stop-color="#fff" stop-opacity="0"/><stop offset="1" stop-color="#000" stop-opacity=".1"/></linearGradient></defs><rect x="756.5" y="287" width="490.0" height="188.5" fill="#fff"/><rect x="756.5" y="287" width="490.0" height="31.2" fill="#f5f5f5"/><rect x="756.5" y="370.5" width="490.0" height="52.5" fill="#f5f5f5"/><path d="M752.5 318.2H1246.5" stroke="#d6d6d6"/><path d="M752.5 370.5H1246.5" stroke="#d6d6d6"/><path d="M752.5 423H1246.5" stroke="#d6d6d6"/><path d="M756.5 287.5H1246.5" stroke="#d9d9d9"/><path d="M1246.0 287V475.5" stroke="#e2e2e2"/><path d="M756.5 287V475.5" stroke="#b5b5b5"/><path d="M752.5 475.5H1246.5" stroke="#b0b0b0" stroke-width="1.3"/><path d="M754.5 465.0H756.5" stroke="#a5a5a5"/><path d="M754.5 454.5H756.5" stroke="#a5a5a5"/><path d="M754.5 444.1H756.5" stroke="#a5a5a5"/><path d="M754.5 433.6H756.5" stroke="#a5a5a5"/><path d="M754.5 423.1H756.5" stroke="#a5a5a5"/><path d="M754.5 412.6H756.5" stroke="#a5a5a5"/><path d="M754.5 402.1H756.5" stroke="#a5a5a5"/><path d="M754.5 391.7H756.5" stroke="#a5a5a5"/><path d="M754.5 381.2H756.5" stroke="#a5a5a5"/><path d="M754.5 370.7H756.5" stroke="#a5a5a5"/><path d="M754.5 360.2H756.5" stroke="#a5a5a5"/><path d="M754.5 349.7H756.5" stroke="#a5a5a5"/><path d="M754.5 339.3H756.5" stroke="#a5a5a5"/><path d="M754.5 328.8H756.5" stroke="#a5a5a5"/><path d="M754.5 318.3H756.5" stroke="#a5a5a5"/><path d="M754.5 307.8H756.5" stroke="#a5a5a5"/><path d="M754.5 297.3H756.5" stroke="#a5a5a5"/><rect x="766.5" y="412.5" width="17" height="63.0" fill="url(#gg)" stroke="#55720d" stroke-width=".8"/><rect x="766.5" y="412.5" width="17" height="63.0" fill="url(#gh)"/><rect x="785.2" y="433.7" width="16.3" height="41.8" fill="url(#gr)" stroke="#7d252b" stroke-width=".8"/><rect x="785.2" y="433.7" width="16.3" height="41.8" fill="url(#gh)"/><path d="M784.2 475.5v4.5" stroke="#8a8a8a"/><rect x="821.0" y="412.5" width="17" height="63.0" fill="url(#gg)" stroke="#55720d" stroke-width=".8"/><rect x="821.0" y="412.5" width="17" height="63.0" fill="url(#gh)"/><rect x="839.7" y="432.1" width="16.3" height="43.4" fill="url(#gr)" stroke="#7d252b" stroke-width=".8"/><rect x="839.7" y="432.1" width="16.3" height="43.4" fill="url(#gh)"/><path d="M838.7 475.5v4.5" stroke="#8a8a8a"/><rect x="875.0" y="359.5" width="17" height="116.0" fill="url(#gg)" stroke="#55720d" stroke-width=".8"/><rect x="875.0" y="359.5" width="17" height="116.0" fill="url(#gh)"/><rect x="893.7" y="433.0" width="16.3" height="42.5" fill="url(#gr)" stroke="#7d252b" stroke-width=".8"/><rect x="893.7" y="433.0" width="16.3" height="42.5" fill="url(#gh)"/><path d="M892.7 475.5v4.5" stroke="#8a8a8a"/><rect x="929.2" y="402.5" width="17" height="73.0" fill="url(#gg)" stroke="#55720d" stroke-width=".8"/><rect x="929.2" y="402.5" width="17" height="73.0" fill="url(#gh)"/><rect x="947.9" y="432.1" width="16.3" height="43.4" fill="url(#gr)" stroke="#7d252b" stroke-width=".8"/><rect x="947.9" y="432.1" width="16.3" height="43.4" fill="url(#gh)"/><path d="M946.9 475.5v4.5" stroke="#8a8a8a"/><rect x="983.7" y="402.5" width="17" height="73.0" fill="url(#gg)" stroke="#55720d" stroke-width=".8"/><rect x="983.7" y="402.5" width="17" height="73.0" fill="url(#gh)"/><rect x="1002.4" y="400.3" width="16.3" height="75.2" fill="url(#gr)" stroke="#7d252b" stroke-width=".8"/><rect x="1002.4" y="400.3" width="16.3" height="75.2" fill="url(#gh)"/><path d="M1001.4 475.5v4.5" stroke="#8a8a8a"/><rect x="1038.0" y="411.5" width="17" height="64.0" fill="url(#gg)" stroke="#55720d" stroke-width=".8"/><rect x="1038.0" y="411.5" width="17" height="64.0" fill="url(#gh)"/><rect x="1056.7" y="429.3" width="16.3" height="46.2" fill="url(#gr)" stroke="#7d252b" stroke-width=".8"/><rect x="1056.7" y="429.3" width="16.3" height="46.2" fill="url(#gh)"/><path d="M1055.7 475.5v4.5" stroke="#8a8a8a"/><rect x="1092.3" y="411.2" width="17" height="64.3" fill="url(#gg)" stroke="#55720d" stroke-width=".8"/><rect x="1092.3" y="411.2" width="17" height="64.3" fill="url(#gh)"/><rect x="1111.0" y="432.1" width="16.3" height="43.4" fill="url(#gr)" stroke="#7d252b" stroke-width=".8"/><rect x="1111.0" y="432.1" width="16.3" height="43.4" fill="url(#gh)"/><path d="M1110.0 475.5v4.5" stroke="#8a8a8a"/><rect x="1147.0" y="462.7" width="17" height="12.8" fill="url(#gg)" stroke="#55720d" stroke-width=".8"/><rect x="1147.0" y="462.7" width="17" height="12.8" fill="url(#gh)"/><rect x="1165.7" y="433.0" width="16.3" height="42.5" fill="url(#gr)" stroke="#7d252b" stroke-width=".8"/><rect x="1165.7" y="433.0" width="16.3" height="42.5" fill="url(#gh)"/><path d="M1164.7 475.5v4.5" stroke="#8a8a8a"/><rect x="1201.0" y="304.0" width="17" height="171.5" fill="url(#gg)" stroke="#55720d" stroke-width=".8"/><rect x="1201.0" y="304.0" width="17" height="171.5" fill="url(#gh)"/><rect x="1219.7" y="369.8" width="16.3" height="105.7" fill="url(#gr)" stroke="#7d252b" stroke-width=".8"/><rect x="1219.7" y="369.8" width="16.3" height="105.7" fill="url(#gh)"/><path d="M1218.7 475.5v4.5" stroke="#8a8a8a"/></svg><span class="t" style="right:-748px;transform-origin:100% 7px;top:313px;font-size:9.0px;color:#1a1a1a;transform:scale(0.911,1.06);-webkit-text-stroke:.1px">6000 €</span><span class="t" style="right:-748px;transform-origin:100% 7px;top:366px;font-size:9.0px;color:#1a1a1a;transform:scale(0.911,1.06);-webkit-text-stroke:.1px">4000 €</span><span class="t" style="right:-748px;transform-origin:100% 7px;top:419px;font-size:9.0px;color:#1a1a1a;transform:scale(0.911,1.06);-webkit-text-stroke:.1px">2000 €</span><span class="t" style="right:-748px;transform-origin:100% 7px;top:471px;font-size:9.0px;color:#1a1a1a;transform:scale(0.911,1.06);-webkit-text-stroke:.1px">0 €</span><span class="t" style="left:764.95px;transform-origin:0 7px;top:497px;font-size:9.0px;color:#111;transform:scale(1.029,1.06);">November</span><span class="t" style="left:819.4px;transform-origin:0 7px;top:484px;font-size:9.0px;color:#111;transform:scale(0.963,1.06);">Dezember</span><span class="t" style="left:880.25px;transform-origin:0 7px;top:497px;font-size:9.0px;color:#111;transform:scale(0.963,1.06);">Januar</span><span class="t" style="left:934.3px;transform-origin:0 7px;top:484px;font-size:9.0px;color:#111;transform:scale(0.952,1.06);">Februar</span><span class="t" style="left:993.5px;transform-origin:0 7px;top:497px;font-size:9.0px;color:#111;transform:scale(0.95,1.06);">März</span><span class="t" style="left:1045.5px;transform-origin:0 7px;top:484px;font-size:9.0px;color:#111;transform:scale(1.055,1.06);">April</span><span class="t" style="left:1104.4px;transform-origin:0 7px;top:497px;font-size:9.0px;color:#111;transform:scale(1.033,1.06);">Mai</span><span class="t" style="left:1155.9px;transform-origin:0 7px;top:484px;font-size:9.0px;color:#111;transform:scale(0.945,1.06);">Juni</span><span class="t" style="left:1214.5px;transform-origin:0 7px;top:497px;font-size:9.0px;color:#111;transform:scale(0.962,1.06);">Juli</span>
</section>
<section class="g" id="p-sparbuch">
<div class="panel" style="left:135px;top:528px;width:558px;height:230px;"><div class="ph"></div></div>
<div style="left:139px;top:535px;width:2px;height:2px;background:#b5b5b5;border-radius:1px"></div><div style="left:139px;top:539px;width:2px;height:2px;background:#b5b5b5;border-radius:1px"></div><div style="left:139px;top:543px;width:2px;height:2px;background:#b5b5b5;border-radius:1px"></div>
<span class="t" style="left:147.3px;transform-origin:0 7px;top:537px;font-size:9.0px;font-weight:bold;color:#000;transform:scale(0.972,1.06);">Sparbuch Familie Muster</span>
<svg style="left:677px;top:535.5px" width="10" height="10"><path d="M1 1l8 8M9 1l-8 8" stroke="#949494" stroke-width="2.1"/></svg><svg style="left:654.1px;top:533.5px" width="13" height="13" viewBox="0 0 12 12"><g fill="#949494"><path d="M6.5 5.5V1.5l1.3 1.3L10 .6l1.4 1.4-2.2 2.2 1.3 1.3z"/><path d="M5.5 6.5v4L4.2 9.2 2 11.4.6 10l2.2-2.2L1.5 6.5z"/></g></svg><div style="left:644px;top:533.0px;width:1px;height:14px;background:#e3e3e3"></div><svg style="left:621.9px;top:534.5px" width="11" height="11" viewBox="0 0 12 12"><g stroke="#949494" stroke-width="2"><path d="M6 .3v11.4M.3 6h11.4M2 2l8 8M10 2l-8 8"/></g><circle cx="6" cy="6" r="3.8" fill="#949494"/><circle cx="6" cy="6" r="1.5" fill="#f2f2f2"/></svg><svg style="left:600.7px;top:533.5px" width="12" height="12" viewBox="0 0 12 12"><path d="M8.9 4.2A3.7 3.7 0 1 0 9.7 7" fill="none" stroke="#949494" stroke-width="1.8"/><path d="M6.3 .3l4.3 2.6-3.4 2.7z" fill="#949494"/></svg><svg style="left:581.5px;top:534.5px" width="11" height="11"><path d="M5.5 .5v10M.5 5.5h10" stroke="#949494" stroke-width="1.9"/></svg>
<div style="left:136px;top:574.5px;width:556px;height:31.0px;background:#fff"></div><div style="left:228px;top:574.5px;width:1px;height:30.5px;background:#eef0f4"></div><div style="left:506.5px;top:574.5px;width:1px;height:30.5px;background:#eef0f4"></div><div style="left:599px;top:574.5px;width:1px;height:30.5px;background:#eef0f4"></div><span class="t" style="left:141.3px;transform-origin:0 7px;top:586px;font-size:9.0px;color:#000;transform:scale(0.939,1.06);">26.06.</span><span class="t" style="left:233.8px;transform-origin:0 7px;top:579px;font-size:9.0px;color:#000;transform:scale(1.005,1.06);">Hans und Helga Muster</span><span class="t" style="left:233.8px;transform-origin:0 7px;top:591px;font-size:9.0px;color:#000;transform:scale(1.01,1.06);">Monatlicher Sparbeitrag</span><span class="t" style="right:-688px;transform-origin:100% 7px;top:586px;font-size:9.0px;color:#000;transform:scale(0.967,1.06);">300,00 €</span><div style="left:136px;top:605.0px;width:556px;height:31.0px;background:#f2f5fa"></div><div style="left:228px;top:605.0px;width:1px;height:30.5px;background:#eef0f4"></div><div style="left:506.5px;top:605.0px;width:1px;height:30.5px;background:#eef0f4"></div><div style="left:599px;top:605.0px;width:1px;height:30.5px;background:#eef0f4"></div><span class="t" style="left:141.3px;transform-origin:0 7px;top:616px;font-size:9.0px;color:#000;transform:scale(0.939,1.06);">27.06.</span><span class="t" style="left:233.8px;transform-origin:0 7px;top:610px;font-size:9.0px;color:#000;transform:scale(1.009,1.06);">Helga Muster</span><span class="t" style="left:233.8px;transform-origin:0 7px;top:621px;font-size:9.0px;color:#000;transform:scale(1.01,1.06);">Monatlicher Sparbeitrag</span><span class="t" style="right:-688px;transform-origin:100% 7px;top:616px;font-size:9.0px;color:#000;transform:scale(0.967,1.06);">100,00 €</span><div class="th" style="left:136px;top:552px;width:556px;height:22.6px;"></div><span class="t" style="left:139px;transform-origin:0 7px;top:560px;font-size:9.27px;color:#f4f4f4;transform:scale(0.962,1.06);-webkit-text-stroke:0">Datum</span><div style="left:228px;top:552px;width:1px;height:22.6px;background:rgba(255,255,255,.55)"></div><div style="left:227px;top:552px;width:1px;height:22.6px;background:rgba(0,0,0,.08)"></div><span class="t" style="left:232.5px;transform-origin:0 7px;top:560px;font-size:9.27px;color:#f4f4f4;transform:scale(0.977,1.06);-webkit-text-stroke:0">Empfänger/Verwendungszweck</span><span class="t" style="left:510.5px;transform-origin:0 7px;top:560px;font-size:9.27px;color:#f4f4f4;transform:scale(0.958,1.06);-webkit-text-stroke:0">Ausgaben</span><div style="left:599px;top:552px;width:1px;height:22.6px;background:rgba(255,255,255,.55)"></div><div style="left:598px;top:552px;width:1px;height:22.6px;background:rgba(0,0,0,.08)"></div><span class="t" style="left:603px;transform-origin:0 7px;top:560px;font-size:9.27px;color:#f4f4f4;transform:scale(0.965,1.06);-webkit-text-stroke:0">Einnahmen</span><svg style="left:213.5px;top:560px" width="7" height="6"><path d="M3.5 .3L6.8 5.5H.2z" fill="#fff"/></svg>
</section>
<section class="g" id="p-giro">
<div class="panel" style="left:701px;top:531px;width:558px;height:230px;"><div class="ph"></div></div>
<div style="left:705px;top:538px;width:2px;height:2px;background:#b5b5b5;border-radius:1px"></div><div style="left:705px;top:542px;width:2px;height:2px;background:#b5b5b5;border-radius:1px"></div><div style="left:705px;top:546px;width:2px;height:2px;background:#b5b5b5;border-radius:1px"></div>
<span class="t" style="left:713.3px;transform-origin:0 7px;top:540px;font-size:9.0px;font-weight:bold;color:#000;transform:scale(0.981,1.06);">Giro Hans und Helga Muster</span>
<svg style="left:1243px;top:538.5px" width="10" height="10"><path d="M1 1l8 8M9 1l-8 8" stroke="#949494" stroke-width="2.1"/></svg><svg style="left:1220.1px;top:536.5px" width="13" height="13" viewBox="0 0 12 12"><g fill="#949494"><path d="M6.5 5.5V1.5l1.3 1.3L10 .6l1.4 1.4-2.2 2.2 1.3 1.3z"/><path d="M5.5 6.5v4L4.2 9.2 2 11.4.6 10l2.2-2.2L1.5 6.5z"/></g></svg><div style="left:1210px;top:536.0px;width:1px;height:14px;background:#e3e3e3"></div><svg style="left:1187.9px;top:537.5px" width="11" height="11" viewBox="0 0 12 12"><g stroke="#949494" stroke-width="2"><path d="M6 .3v11.4M.3 6h11.4M2 2l8 8M10 2l-8 8"/></g><circle cx="6" cy="6" r="3.8" fill="#949494"/><circle cx="6" cy="6" r="1.5" fill="#f2f2f2"/></svg><svg style="left:1166.7px;top:536.5px" width="12" height="12" viewBox="0 0 12 12"><path d="M8.9 4.2A3.7 3.7 0 1 0 9.7 7" fill="none" stroke="#949494" stroke-width="1.8"/><path d="M6.3 .3l4.3 2.6-3.4 2.7z" fill="#949494"/></svg><svg style="left:1147.5px;top:537.5px" width="11" height="11"><path d="M5.5 .5v10M.5 5.5h10" stroke="#949494" stroke-width="1.9"/></svg>
<div style="left:702px;top:577.4px;width:556px;height:30.95px;background:#fff"></div><div style="left:791px;top:577.4px;width:1px;height:30.45px;background:#eef0f4"></div><div style="left:1063px;top:577.4px;width:1px;height:30.45px;background:#eef0f4"></div><div style="left:1154px;top:577.4px;width:1px;height:30.45px;background:#eef0f4"></div><span class="t" style="left:707.3px;transform-origin:0 7px;top:588px;font-size:9.0px;color:#000;transform:scale(0.939,1.06);">26.06.</span><span class="t" style="left:798.6px;transform-origin:0 7px;top:582px;font-size:9.0px;color:#000;transform:scale(0.943,1.06);">1 2 oder 3 INTERNET AG</span><span class="t" style="left:798.6px;transform-origin:0 7px;top:593px;font-size:9.0px;color:#000;transform:scale(0.908,1.06);">ZAHLUNGSBELEG 00217</span><span class="t" style="right:-1150.2px;transform-origin:100% 7px;top:588px;font-size:9.0px;color:#a83a40;transform:scale(0.944,1.06);">-26,90 €</span><div style="left:702px;top:607.85px;width:556px;height:30.95px;background:#f2f5fa"></div><div style="left:791px;top:607.85px;width:1px;height:30.45px;background:#eef0f4"></div><div style="left:1063px;top:607.85px;width:1px;height:30.45px;background:#eef0f4"></div><div style="left:1154px;top:607.85px;width:1px;height:30.45px;background:#eef0f4"></div><span class="t" style="left:707.3px;transform-origin:0 7px;top:619px;font-size:9.0px;color:#000;transform:scale(0.939,1.06);">27.06.</span><span class="t" style="left:798.6px;transform-origin:0 7px;top:613px;font-size:9.0px;color:#000;transform:scale(0.996,1.06);">Michael Siegfried</span><span class="t" style="left:798.6px;transform-origin:0 7px;top:624px;font-size:9.0px;color:#000;transform:scale(0.966,1.06);">MIETE Hans Muster</span><span class="t" style="right:-1150.2px;transform-origin:100% 7px;top:619px;font-size:9.0px;color:#a83a40;transform:scale(0.944,1.06);">-378,00 €</span><div style="left:702px;top:638.3px;width:556px;height:30.95px;background:#fff"></div><div style="left:791px;top:638.3px;width:1px;height:30.45px;background:#eef0f4"></div><div style="left:1063px;top:638.3px;width:1px;height:30.45px;background:#eef0f4"></div><div style="left:1154px;top:638.3px;width:1px;height:30.45px;background:#eef0f4"></div><span class="t" style="left:707.3px;transform-origin:0 7px;top:649px;font-size:9.0px;color:#000;transform:scale(0.939,1.06);">28.06.</span><span class="t" style="left:798.6px;transform-origin:0 7px;top:643px;font-size:9.0px;color:#000;transform:scale(0.966,1.06);">MINUS</span><span class="t" style="left:798.6px;transform-origin:0 7px;top:654px;font-size:9.0px;color:#000;transform:scale(0.908,1.06);">ELV91245805 14.08 12.09 ME3</span><span class="t" style="right:-1150.2px;transform-origin:100% 7px;top:649px;font-size:9.0px;color:#a83a40;transform:scale(0.944,1.06);">-21,00 €</span><div style="left:702px;top:668.75px;width:556px;height:30.95px;background:#f2f5fa"></div><div style="left:791px;top:668.75px;width:1px;height:30.45px;background:#eef0f4"></div><div style="left:1063px;top:668.75px;width:1px;height:30.45px;background:#eef0f4"></div><div style="left:1154px;top:668.75px;width:1px;height:30.45px;background:#eef0f4"></div><span class="t" style="left:707.3px;transform-origin:0 7px;top:680px;font-size:9.0px;color:#000;transform:scale(0.939,1.06);">30.06.</span><span class="t" style="left:798.6px;transform-origin:0 7px;top:674px;font-size:9.0px;color:#000;transform:scale(0.903,1.06);">GEZ KOELN</span><span class="t" style="left:798.6px;transform-origin:0 7px;top:685px;font-size:9.0px;color:#000;transform:scale(0.928,1.06);">TEILNEHMERNUMMER 421455085</span><span class="t" style="right:-1150.2px;transform-origin:100% 7px;top:680px;font-size:9.0px;color:#a83a40;transform:scale(0.944,1.06);">-51,09 €</span><div style="left:702px;top:699.2px;width:556px;height:30.95px;background:#fff"></div><div style="left:791px;top:699.2px;width:1px;height:30.45px;background:#eef0f4"></div><div style="left:1063px;top:699.2px;width:1px;height:30.45px;background:#eef0f4"></div><div style="left:1154px;top:699.2px;width:1px;height:30.45px;background:#eef0f4"></div><span class="t" style="left:707.3px;transform-origin:0 7px;top:710px;font-size:9.0px;color:#000;transform:scale(0.939,1.06);">30.06.</span><span class="t" style="left:798.6px;transform-origin:0 7px;top:704px;font-size:9.0px;color:#000;transform:scale(0.928,1.06);">SONNENGELB BANK AG</span><span class="t" style="left:798.6px;transform-origin:0 7px;top:715px;font-size:9.0px;color:#000;transform:scale(0.921,1.06);">01-07-04 KG0 49 734 3619</span><span class="t" style="right:-1150.2px;transform-origin:100% 7px;top:710px;font-size:9.0px;color:#a83a40;transform:scale(0.944,1.06);">-726,00 €</span><div style="left:702px;top:729.65px;width:556px;height:18.85px;background:#f2f5fa"></div><div style="left:791px;top:729.65px;width:1px;height:18.35px;background:#eef0f4"></div><div style="left:1063px;top:729.65px;width:1px;height:18.35px;background:#eef0f4"></div><div style="left:1154px;top:729.65px;width:1px;height:18.35px;background:#eef0f4"></div><span class="t" style="left:707.3px;transform-origin:0 7px;top:741px;font-size:9.0px;color:#000;transform:scale(0.939,1.06);">30.06.</span><span class="t" style="left:798.6px;transform-origin:0 7px;top:735px;font-size:9.0px;color:#000;transform:scale(0.925,1.06);">REGIONAL Vers.</span><span class="t" style="left:798.6px;transform-origin:0 7px;top:746px;font-size:9.0px;color:#000;transform:scale(0.904,1.06);">0221-014 540 435 LEBEN</span><span class="t" style="right:-1150.2px;transform-origin:100% 7px;top:741px;font-size:9.0px;color:#a83a40;transform:scale(0.944,1.06);">-15,24 €</span><div class="th" style="left:702px;top:555px;width:556px;height:22.6px;"></div><span class="t" style="left:705px;transform-origin:0 7px;top:563px;font-size:9.27px;color:#f4f4f4;transform:scale(0.962,1.06);-webkit-text-stroke:0">Datum</span><div style="left:791px;top:555px;width:1px;height:22.6px;background:rgba(255,255,255,.55)"></div><div style="left:790px;top:555px;width:1px;height:22.6px;background:rgba(0,0,0,.08)"></div><span class="t" style="left:796px;transform-origin:0 7px;top:563px;font-size:9.27px;color:#f4f4f4;transform:scale(0.977,1.06);-webkit-text-stroke:0">Empfänger/Verwendungszweck</span><div style="left:1063px;top:555px;width:1px;height:22.6px;background:rgba(255,255,255,.55)"></div><div style="left:1062px;top:555px;width:1px;height:22.6px;background:rgba(0,0,0,.08)"></div><span class="t" style="left:1068px;transform-origin:0 7px;top:563px;font-size:9.27px;color:#f4f4f4;transform:scale(0.958,1.06);-webkit-text-stroke:0">Ausgaben</span><div style="left:1154px;top:555px;width:1px;height:22.6px;background:rgba(255,255,255,.55)"></div><div style="left:1153px;top:555px;width:1px;height:22.6px;background:rgba(0,0,0,.08)"></div><span class="t" style="left:1159px;transform-origin:0 7px;top:563px;font-size:9.27px;color:#f4f4f4;transform:scale(0.965,1.06);-webkit-text-stroke:0">Einnahmen</span><svg style="left:776.5px;top:563px" width="7" height="6"><path d="M3.5 .3L6.8 5.5H.2z" fill="#fff"/></svg><div style="left:1245px;top:577.5px;width:13px;height:171px;background:linear-gradient(90deg,#e9e9e9,#f4f4f4 40%,#f0f0f0)"></div><div style="left:1245.5px;top:578px;width:12px;height:11px;background:#f4f4f4"></div><svg style="left:1248.5px;top:581.5px" width="6" height="4"><path d="M3 .3L5.7 3.7H.3z" fill="#777"/></svg><div style="left:1246px;top:590px;width:11.5px;height:62px;background:linear-gradient(90deg,#f3f3f3,#e6e6e6 50%,#d2d2d2);border:1px solid #9c9c9c;border-radius:2px"></div><div style="left:1249px;top:617px;width:6px;height:1px;background:#666"></div><div style="left:1249px;top:619px;width:6px;height:1px;background:#666"></div><div style="left:1249px;top:621px;width:6px;height:1px;background:#666"></div>
</section>
<div class="g" id="vscroll">
<div style="left:1267px;top:94px;width:13px;height:654px;background:linear-gradient(90deg,#e6e6e6,#efefef 35%,#f1f1f1)"></div>
<div style="left:1267.7px;top:94.5px;width:11px;height:11.5px;background:#f3f3f3;border:1px solid #b4b4b4"></div>
<svg style="left:1270.7px;top:98.3px" width="5" height="4"><path d="M2.5 .3L4.8 3.6H.2z" fill="#5a5a5a"/></svg>
<div style="left:1267.7px;top:106.5px;width:11px;height:321px;background:linear-gradient(90deg,#f1f1f2,#e8e8e9 45%,#cdcdce);border:1px solid #a6a6a6;border-radius:2px"></div>
<div style="left:1270.5px;top:264px;width:5.5px;height:1px;background:#6a6a6a"></div><div style="left:1270.5px;top:266px;width:5.5px;height:1px;background:#6a6a6a"></div><div style="left:1270.5px;top:268px;width:5.5px;height:1px;background:#6a6a6a"></div>
<div style="left:1267.7px;top:735px;width:11px;height:12px;background:#f3f3f3;border:1px solid #b4b4b4"></div>
<svg style="left:1270.7px;top:739.3px" width="5" height="4"><path d="M.2 .3h4.6L2.5 3.6z" fill="#5a5a5a"/></svg>
</div>
</section>
<footer class="g" id="statusbar">
<div style="left:0px;top:748px;width:1280px;height:22px;background:linear-gradient(#2a588c 0,#5b96d4 1.5px,#5590ce 5px,#477fbc 12px,#3a6ca5 19px,#35649b 22px)"></div>
<div style="left:128px;top:750.5px;width:1118px;height:17px;border:1px solid #2a5688;border-radius:3.5px;background:linear-gradient(#2f6097,#2d5e95)"></div>
<svg style="left:136px;top:755px" width="11.5" height="7.5"><rect x="0" y="0" width="11.5" height="7.2" rx=".8" fill="#f3f6fa"/><path d="M.5 1l5 3.5 5-3.5" fill="none" stroke="#c8d3e0" stroke-width=".8"/></svg>
<span class="t" style="left:151.8px;transform-origin:0 7px;top:755px;font-size:9.0px;color:#eef3f9;transform:scale(1.0,1.06);">Automatisches Backup erstellt</span>
<div style="left:1191px;top:751.5px;width:54px;height:15px;background:linear-gradient(100deg,#6089b6,#4874a6 40%,#3a699f 75%,#34649b);border-radius:0 3px 3px 0"></div>
<span class="t" style="left:1200.2px;transform-origin:0 7px;top:755px;font-size:9.0px;color:#eef3f9;transform:scale(0.977,1.06);">Verlauf</span>
<svg style="left:1234.6px;top:756.3px" width="8" height="6"><path d="M.3 .5h6.7L3.65 5z" fill="#fff"/></svg>
<svg style="left:1252px;top:755px" width="11.5" height="7.5"><rect x="0" y="0" width="11.5" height="7.2" rx=".8" fill="#f3f6fa"/><path d="M.5 1l5 3.5 5-3.5" fill="none" stroke="#c8d3e0" stroke-width=".8"/></svg>
<span class="t" style="left:1266.5px;transform-origin:0 7px;top:755px;font-size:9.0px;color:#eef3f9;transform:scale(1.0,1.06);">5</span>
</footer>
</div></body></html>
